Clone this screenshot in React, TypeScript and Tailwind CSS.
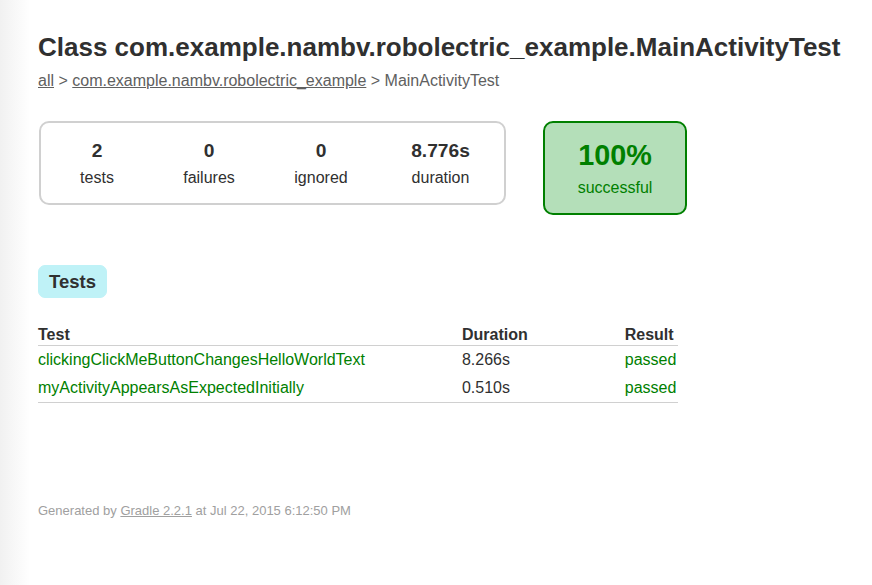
import React from "react";

const tests = [
  { name: "clickingClickMeButtonChangesHelloWorldText", duration: "8.266s", result: "passed" },
  { name: "myActivityAppearsAsExpectedInitially", duration: "0.510s", result: "passed" },
];

const counters = [
  { value: "2", label: "tests", w: "w-[112px]" },
  { value: "0", label: "failures", w: "w-[112px]" },
  { value: "0", label: "ignored", w: "w-[112px]" },
  { value: "8.776s", label: "duration", w: "w-[127px]" },
];

export default function App() {
  return (
    <div className="min-h-[585px] bg-[linear-gradient(to_right,#f1f1f1_0px,#ffffff_30px)] pl-[38px] pt-[32px] font-['Liberation_Sans',Arial,Helvetica,sans-serif] text-[16px] text-[#303030]">
      <h1 className="whitespace-nowrap text-[26px] font-bold leading-[30px]">
        Class com.example.nambv.robolectric_example.MainActivityTest
      </h1>
      <div className="mt-[10px] whitespace-nowrap leading-[18px] text-[#606060]">
        <a className="underline">all</a> &gt;{" "}
        <a className="underline">com.example.nambv.robolectric_example</a> &gt; MainActivityTest
      </div>

      <div className="ml-[1px] mt-[31px] flex items-start">
        <div className="flex rounded-[10px] border-2 border-[#d0d0d0]">
          {counters.map((c) => (
            <div key={c.label} className={`${c.w} pb-[16px] pt-[17px] text-center`}>
              <div className="mb-[7px] text-[19.2px] font-bold leading-[22px]">{c.value}</div>
              <div className="leading-[18px]">{c.label}</div>
            </div>
          ))}
        </div>
        <div className="ml-[37px] w-[144px] rounded-[10px] border-2 border-[#008000] bg-[#b4dfb9] pb-[16px] pt-[16px] text-center text-[#008000]">
          <div className="mb-[7px] text-[28.8px] font-bold leading-[33px]">100%</div>
          <div className="leading-[18px]">successful</div>
        </div>
      </div>

      <div className="mt-[50px] inline-block rounded-[7px] border border-[#bff2f7] bg-[#bff2f7] px-[10px] py-[5px] text-[18.5px] font-bold leading-[21px] text-[#303030]">
        Tests
      </div>

      <table className="mt-[27px] border-collapse border-b border-[#d0d0d0]">
        <thead>
          <tr>
            <th className="whitespace-nowrap border-b border-[#d0d0d0] py-[1px] pl-0 text-left font-bold leading-[18px]">Test</th>
            <th className="whitespace-nowrap border-b border-[#d0d0d0] py-[1px] pl-[97px] text-left font-bold leading-[18px]">Duration</th>
            <th className="whitespace-nowrap border-b border-[#d0d0d0] py-[1px] pl-[97px] pr-[2px] text-left font-bold leading-[18px]">Result</th>
          </tr>
        </thead>
        <tbody>
          {tests.map((t) => (
            <tr key={t.name}>
              <td className="whitespace-nowrap py-[5px] pl-0 leading-[18px] text-[#008000]">{t.name}</td>
              <td className="whitespace-nowrap py-[5px] pl-[97px] leading-[18px]">{t.duration}</td>
              <td className="whitespace-nowrap py-[5px] pl-[97px] pr-[2px] leading-[18px] text-[#008000]">{t.result}</td>
            </tr>
          ))}
        </tbody>
      </table>

      <div className="mt-[100px] whitespace-nowrap text-[13px] leading-[15px] text-[#a0a0a0]">
        Generated by <a className="underline">Gradle 2.2.1</a> at Jul 22, 2015 6:12:50 PM
      </div>
    </div>
  );
}
